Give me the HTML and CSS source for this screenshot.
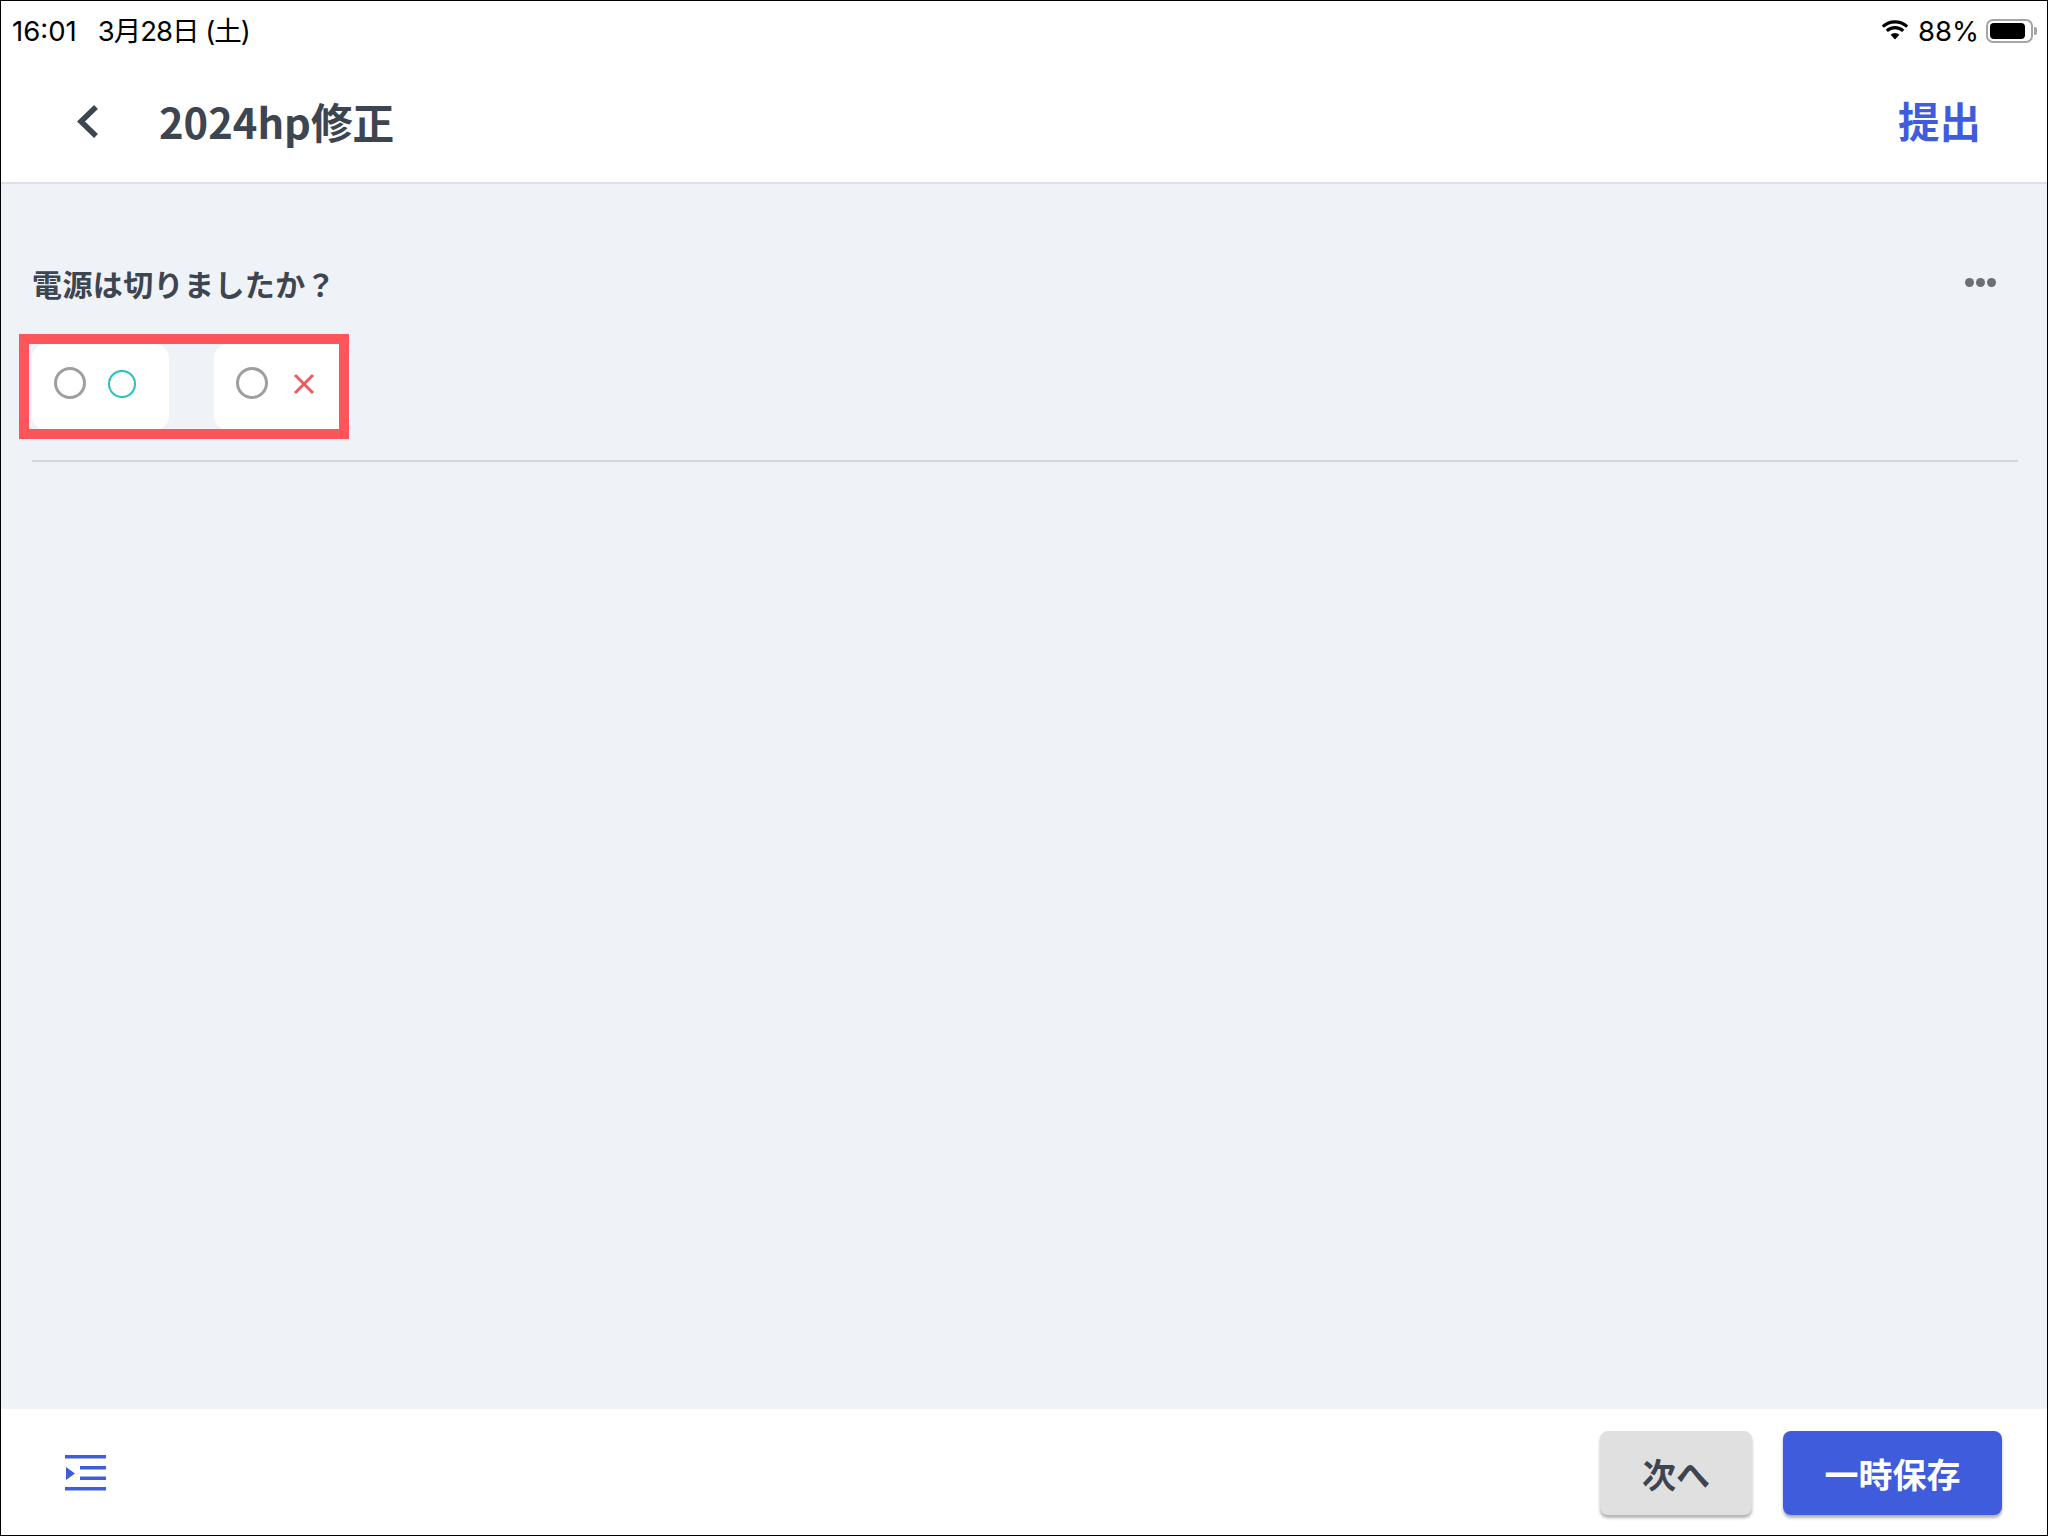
FILE: index.html
```html
<!DOCTYPE html>
<html lang="ja">
<head>
<meta charset="utf-8">
<title>2024hp修正</title>
<link rel="stylesheet" href="styles.css">
</head>
<body>
<div class="frame">
  <div class="status">
    <div class="status-left"><span>16:01</span><span class="date">3月28日 (土)</span></div>
    <div class="status-right">
      <svg class="wifi" width="28" height="20" viewBox="0 0 28 20"><path d="M14 19.5 9.6 14.7a6.6 6.6 0 0 1 8.8 0Z" fill="#000"/><path d="M5.8 10.9a12 12 0 0 1 16.4 0M1.8 6.6a18 18 0 0 1 24.4 0" fill="none" stroke="#000" stroke-width="3.2"/></svg>
      <span>88%</span>
      <div class="battery"><div class="battery-fill"></div></div>
      <div class="battery-tip"></div>
    </div>
  </div>
  <header class="header">
    <div class="header-left">
      <svg class="back" width="24" height="36" viewBox="0 0 24 36"><path d="M20 3 5 17.500 20 32" fill="none" stroke="#3d4550" stroke-width="5.500"/></svg>
      <h1 class="title">2024hp修正</h1>
    </div>
    <div class="submit">提出</div>
  </header>
  <main class="main">
    <div class="question">
      <div class="question-text">電源は切りましたか？</div>
      <div class="dots"><i></i><i></i><i></i></div>
    </div>
    <div class="options">
      <div class="option">
        <span class="radio"></span>
        <svg class="mark" width="30" height="30" viewBox="0 0 30 30"><circle cx="15" cy="15" r="13" fill="none" stroke="#26c1c1" stroke-width="2"/></svg>
      </div>
      <div class="option">
        <span class="radio"></span>
        <svg class="mark" width="30" height="30" viewBox="0 0 30 30"><path d="M6 6 24 24M24 6 6 24" fill="none" stroke="#f25a5f" stroke-width="3"/></svg>
      </div>
      <div class="highlight"></div>
    </div>
    <div class="rule"></div>
  </main>
  <footer class="footer">
    <svg class="list-icon" width="41" height="36" viewBox="0 0 41 36"><path d="M0 0H41V3.500H0ZM15 11H41V14.500H15ZM15 21.500H41V25H15ZM0 32H41V35.500H0ZM1 12 10 18.500 1 25Z" fill="#3e5cdb"/></svg>
    <div class="actions">
      <button class="btn btn-next">次へ</button>
      <button class="btn btn-save">一時保存</button>
    </div>
  </footer>
</div>
</body>
</html>
```

FILE: styles.css
```css
* { box-sizing: border-box; }
html, body { margin: 0; padding: 0; }
body {
  width: 2048px;
  height: 1536px;
  font-family: "Noto Sans CJK JP", "Noto Sans", sans-serif;
  background: #fff;
}
.frame {
  width: 2048px;
  height: 1536px;
  border: 1px solid #000;
  display: flex;
  flex-direction: column;
  overflow: hidden;
}
.status {
  height: 59px;
  flex: none;
  display: flex;
  justify-content: space-between;
  align-items: center;
  padding: 0 10px 0 11px;
  font-family: Inter, "Noto Sans CJK JP", sans-serif;
  font-size: 27.5px;
  line-height: 60px;
  color: #000;
}
.status-left { display: flex; align-items: baseline; gap: 21px; }
.date { letter-spacing: -1px; }
.status-right { display: flex; align-items: center; }
.wifi { margin-right: 9px; margin-top: -1px; }
.battery {
  margin-left: 7px;
  width: 47px;
  height: 24px;
  border: 2px solid #a5a5a5;
  border-radius: 7px;
  padding: 2px;
}
.battery-fill { width: 35px; height: 16px; background: #000; border-radius: 4px; }
.battery-tip { width: 3px; height: 8px; margin-left: 1px; background: #a5a5a5; border-radius: 0 2px 2px 0; }
.header {
  height: 124px;
  flex: none;
  display: flex;
  justify-content: space-between;
  align-items: center;
  padding: 0 66px 0 75px;
  border-bottom: 2px solid #dbe0e9;
}
.header-left { display: flex; align-items: center; gap: 59px; }
.back { margin-top: 2px; }
.title {
  margin: 0;
  font-size: 41.700px;
  line-height: 60px;
  font-weight: 700;
  color: #3d4550;
}
.submit { font-size: 41.500px; font-weight: 700; color: #3e5cdb; margin-top: -2px; }
.main {
  flex: 1;
  background: #eff2f7;
  padding: 79px 29px 0 31px;
}
.question {
  height: 40px;
  display: flex;
  justify-content: space-between;
  align-items: center;
  padding: 0 22px 0 0;
}
.question-text {
  font-size: 30px;
  line-height: 38px;
  font-weight: 700;
  letter-spacing: 0.400px;
  color: #3d4550;
}
.dots { display: flex; gap: 2px; margin-bottom: 1px; }
.dots i { width: 9px; height: 9px; border-radius: 50%; background: #6b6f76; }
.options { position: relative; display: flex; gap: 45px; height: 86px; margin-top: 41px; }
.option {
  width: 137px;
  height: 86px;
  background: #fff;
  border-radius: 14px;
  display: flex;
  align-items: center;
  gap: 21px;
  padding: 0 0 9px 22px;
}
.radio {
  width: 32px;
  height: 32px;
  flex: none;
  border: 3.500px solid #9e9e9e;
  border-radius: 50%;
}
.mark { flex: none; margin-top: 3px; }
.highlight {
  position: absolute;
  left: -13px;
  top: -10px;
  width: 330px;
  height: 105px;
  border: 10px solid #ff5459;
}
.rule { height: 2px; margin-top: 30px; background: #d3d6db; }
.footer {
  height: 126px;
  flex: none;
  display: flex;
  justify-content: space-between;
  align-items: center;
  padding: 0 45px 0 64px;
}
.list-icon { margin-top: 1px; }
.actions { display: flex; gap: 31px; margin-top: 2px; }
.btn {
  height: 84px;
  border: 0;
  border-radius: 8px;
  font-family: inherit;
  font-weight: 700;
  font-size: 34px;
  box-shadow: 0 3px 3px rgba(0, 0, 0, .3);
}
.btn-next { width: 152px; background: #e0e0e0; color: #3d4550; }
.btn-save { width: 219px; background: #3e5cdb; color: #fff; }
```
